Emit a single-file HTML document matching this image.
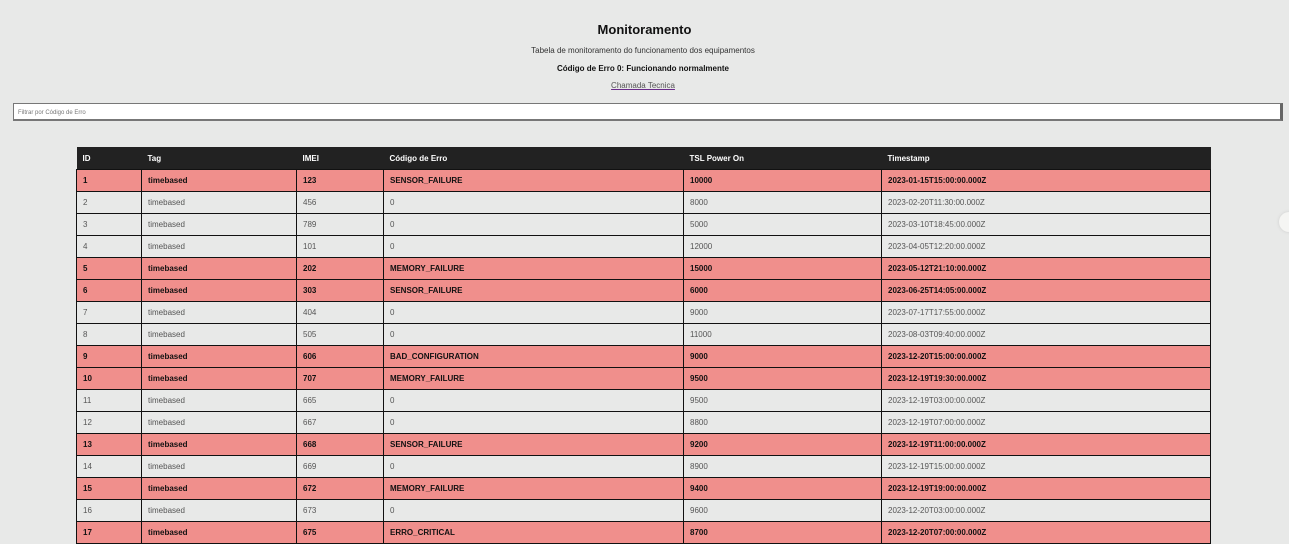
<!DOCTYPE html>
<html><head><meta charset="utf-8"><style>
body{margin:0;background:#e8e9e8;font-family:"Liberation Sans",Arial,sans-serif;width:1289px;height:539px;overflow:hidden;position:relative}
h1{position:absolute;top:22px;left:0;width:1289px;text-align:center;margin:0;font-size:13px;font-weight:bold;color:#111}
.p{position:absolute;left:0;width:1286px;text-align:center;font-size:8px;color:#333}
a{color:#555;text-decoration:underline;text-decoration-color:#6a2b8a}
.in{position:absolute;left:13px;top:103px;width:1270px;height:18px;box-sizing:border-box;border:1px solid #777;border-right:3px solid #666;border-bottom:2px solid #777;background:#fff;padding-left:4px;display:flex;align-items:center}
.in span{font-size:6px;color:#777;display:block;transform:translateY(1px)}
table{position:absolute;left:76px;top:147px;border-collapse:collapse;width:1135px;table-layout:fixed;font-size:8px}
th{background:#222;color:#fff;text-align:left;height:22px;padding:0 6px;font-weight:bold}
td{height:22px;padding:0 6px;border:1px solid #111;color:#555;box-sizing:border-box}
tr.e td{background:#f08f8c;color:#111;font-weight:bold}
.k{position:absolute;left:1279px;top:212px;width:20px;height:20px;border-radius:50%;background:#f5f5f3;box-shadow:0 0 3px #ccc}
</style></head><body>
<h1>Monitoramento</h1>
<div class="p" style="top:46px">Tabela de monitoramento do funcionamento dos equipamentos</div>
<div class="p" style="top:64px;color:#111;font-weight:bold">Código de Erro 0: Funcionando normalmente</div>
<div class="p" style="top:81px"><a>Chamada Tecnica</a></div>
<div class="in"><span>Filtrar por Código de Erro</span></div>
<div class="k"></div>
<table>
<colgroup><col style="width:65px"><col style="width:155px"><col style="width:87px"><col style="width:300px"><col style="width:198px"><col></colgroup>
<tr><th>ID</th><th>Tag</th><th>IMEI</th><th>Código de Erro</th><th>TSL Power On</th><th>Timestamp</th></tr>
<tr class="e"><td>1</td><td>timebased</td><td>123</td><td>SENSOR_FAILURE</td><td>10000</td><td>2023-01-15T15:00:00.000Z</td></tr>
<tr><td>2</td><td>timebased</td><td>456</td><td>0</td><td>8000</td><td>2023-02-20T11:30:00.000Z</td></tr>
<tr><td>3</td><td>timebased</td><td>789</td><td>0</td><td>5000</td><td>2023-03-10T18:45:00.000Z</td></tr>
<tr><td>4</td><td>timebased</td><td>101</td><td>0</td><td>12000</td><td>2023-04-05T12:20:00.000Z</td></tr>
<tr class="e"><td>5</td><td>timebased</td><td>202</td><td>MEMORY_FAILURE</td><td>15000</td><td>2023-05-12T21:10:00.000Z</td></tr>
<tr class="e"><td>6</td><td>timebased</td><td>303</td><td>SENSOR_FAILURE</td><td>6000</td><td>2023-06-25T14:05:00.000Z</td></tr>
<tr><td>7</td><td>timebased</td><td>404</td><td>0</td><td>9000</td><td>2023-07-17T17:55:00.000Z</td></tr>
<tr><td>8</td><td>timebased</td><td>505</td><td>0</td><td>11000</td><td>2023-08-03T09:40:00.000Z</td></tr>
<tr class="e"><td>9</td><td>timebased</td><td>606</td><td>BAD_CONFIGURATION</td><td>9000</td><td>2023-12-20T15:00:00.000Z</td></tr>
<tr class="e"><td>10</td><td>timebased</td><td>707</td><td>MEMORY_FAILURE</td><td>9500</td><td>2023-12-19T19:30:00.000Z</td></tr>
<tr><td>11</td><td>timebased</td><td>665</td><td>0</td><td>9500</td><td>2023-12-19T03:00:00.000Z</td></tr>
<tr><td>12</td><td>timebased</td><td>667</td><td>0</td><td>8800</td><td>2023-12-19T07:00:00.000Z</td></tr>
<tr class="e"><td>13</td><td>timebased</td><td>668</td><td>SENSOR_FAILURE</td><td>9200</td><td>2023-12-19T11:00:00.000Z</td></tr>
<tr><td>14</td><td>timebased</td><td>669</td><td>0</td><td>8900</td><td>2023-12-19T15:00:00.000Z</td></tr>
<tr class="e"><td>15</td><td>timebased</td><td>672</td><td>MEMORY_FAILURE</td><td>9400</td><td>2023-12-19T19:00:00.000Z</td></tr>
<tr><td>16</td><td>timebased</td><td>673</td><td>0</td><td>9600</td><td>2023-12-20T03:00:00.000Z</td></tr>
<tr class="e"><td>17</td><td>timebased</td><td>675</td><td>ERRO_CRITICAL</td><td>8700</td><td>2023-12-20T07:00:00.000Z</td></tr>
</table>
</body></html>
